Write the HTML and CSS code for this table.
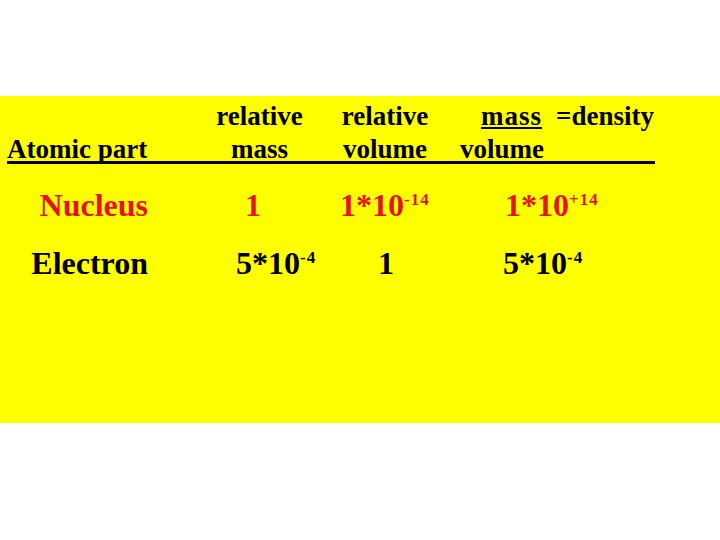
FILE: index.html
```html
<!DOCTYPE html>
<html>
<head>
<meta charset="utf-8">
<link rel="stylesheet" href="styles.css">
</head>
<body>
<div class="slide">
  <div class="header">
    <div class="h-col h1">
      <div class="line">&nbsp;</div>
      <div class="line">Atomic part</div>
    </div>
    <div class="h-col h2">
      <div class="line">relative</div>
      <div class="line">mass</div>
    </div>
    <div class="h-col h3">
      <div class="line">relative</div>
      <div class="line">volume</div>
    </div>
    <div class="h-col h4">
      <div class="line l1"><span class="frac">mass</span><span class="eq">=density</span></div>
      <div class="line l2">volume</div>
    </div>
  </div>
  <div class="row nucleus">
    <div class="c1">Nucleus</div>
    <div class="c2">1</div>
    <div class="c3">1*10<sup>-14</sup></div>
    <div class="c4">1*10<sup>+14</sup></div>
  </div>
  <div class="row electron">
    <div class="c1">Electron</div>
    <div class="c2">5*10<sup>-4</sup></div>
    <div class="c3">1</div>
    <div class="c4">5*10<sup>-4</sup></div>
  </div>
</div>
</body>
</html>
```
FILE: styles.css
```css
html, body {
  margin: 0;
  padding: 0;
  background: #ffffff;
}
body {
  width: 720px;
  height: 540px;
  font-family: "Liberation Serif", "Times New Roman", serif;
  font-weight: bold;
}
.slide {
  margin-top: 96px;
  height: 327px;
  background: #ffff00;
  padding-top: 4px;
  box-sizing: border-box;
  color: #000;
}
.header {
  display: flex;
  margin-left: 7px;
  width: 648px;
  height: 61px;
  border-bottom: 3px solid #000;
  font-size: 27px;
  line-height: 33px;
}
.h-col { white-space: nowrap; }
.h1 { width: 188px; }
.h2 { width: 129px; text-align: center; }
.h3 { width: 122px; text-align: center; }
.h4 { flex: 1; }
.h4 .l1 { padding-left: 35px; }
.h4 .l2 { padding-left: 14px; }
.frac {
  letter-spacing: 1px;
  text-decoration: underline;
  text-decoration-thickness: 2px;
  text-underline-offset: 2px;
}
.eq { margin-left: 14px; }

.row {
  display: flex;
  font-size: 32px;
  line-height: 58px;
  white-space: nowrap;
}
.nucleus { margin-top: 12px; color: #e3141b; }
.electron { color: #000; }
.c1 { width: 148px; text-align: right; }
.c2 { width: 182px; box-sizing: border-box; }
.c3 { width: 120px; box-sizing: border-box; }
.c4 { flex: 1; }
.nucleus .c2 { padding-left: 97px; }
.nucleus .c3 { padding-left: 10px; }
.nucleus .c4 { padding-left: 55px; }
.electron .c2 { padding-left: 88px; }
.electron .c3 { padding-left: 48px; }
.electron .c4 { padding-left: 53px; }
sup {
  font-size: 17px;
  line-height: 0;
  vertical-align: 11px;
  letter-spacing: 1px;
}
```
